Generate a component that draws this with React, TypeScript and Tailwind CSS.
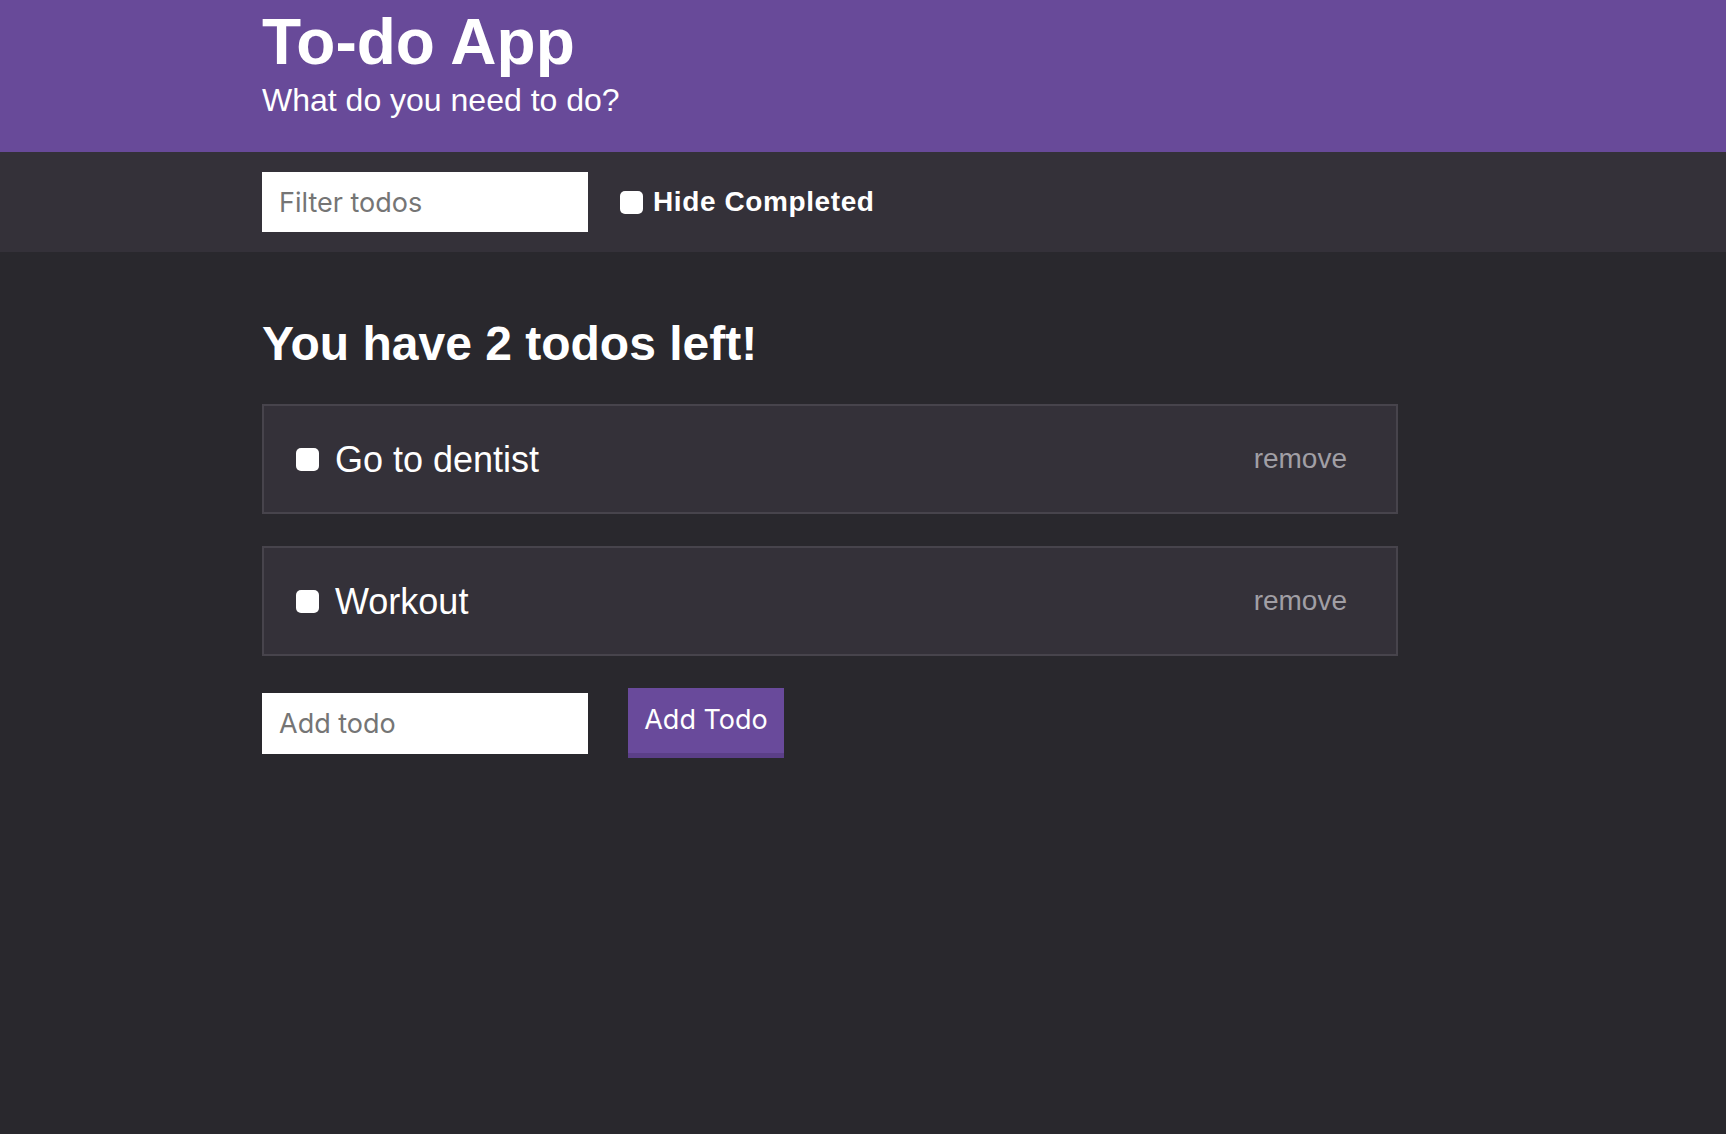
import React from "react";

const sans = { fontFamily: '"Liberation Sans", Arial, Helvetica, sans-serif' };

function Check() {
  return (
    <input
      type="checkbox"
      className="appearance-none w-[23px] h-[23px] rounded-[5px] bg-white shrink-0 m-0"
    />
  );
}

export default function App() {
  const todos = ["Go to dentist", "Workout"];
  return (
    <div
      className="min-h-[1134px] w-full bg-[#29282d] text-white font-['Liberation_Sans',Arial,sans-serif]"
      style={sans}
    >
      <header className="h-[152px] bg-[#684a99] pl-[262px] pt-[10px]">
        <h1 className="text-[64px] leading-[64px] font-bold">To-do App</h1>
        <p className="mt-[8px] text-[32px] leading-[36px]">What do you need to do?</p>
      </header>

      <div className="h-[100px] bg-[#343139] pl-[262px] flex items-center">
        <input
          placeholder="Filter todos"
          className="w-[326px] h-[60px] bg-white px-[17px] text-[27px] text-black placeholder:text-[#757575] outline-none font-['Inter',sans-serif]"
        />
        <label className="ml-[32px] flex items-center gap-[10px] text-[28px] font-bold tracking-[0.6px]">
          <Check />
          <span>Hide Completed</span>
        </label>
      </div>

      <main className="pl-[262px] pt-16">
        <h2 className="text-[48px] leading-[56px] font-bold">You have 2 todos left!</h2>
        <ul className="mt-8 w-[1136px] flex flex-col gap-[32px]">
          {todos.map((t) => (
            <li
              key={t}
              className="border-2 border-[#47444c] bg-[#343139] p-8 flex items-center"
            >
              <Check />
              <span className="ml-[16px] text-[36px] leading-[41px] flex-1">{t}</span>
              <button className="mr-[17px] text-[28px] text-[#a19fa5]">remove</button>
            </li>
          ))}
        </ul>
        <div className="mt-[32px] flex items-center gap-10">
          <input
            placeholder="Add todo"
            className="w-[326px] h-[61px] bg-white px-[17px] text-[27px] text-black placeholder:text-[#757575] outline-none font-['Inter',sans-serif]"
          />
          <button className="h-[70px] w-[156px] bg-[#694a9b] border-b-[5px] border-[#5b3f88] text-[27px] text-white font-['Inter',sans-serif]">
            Add Todo
          </button>
        </div>
      </main>
    </div>
  );
}
